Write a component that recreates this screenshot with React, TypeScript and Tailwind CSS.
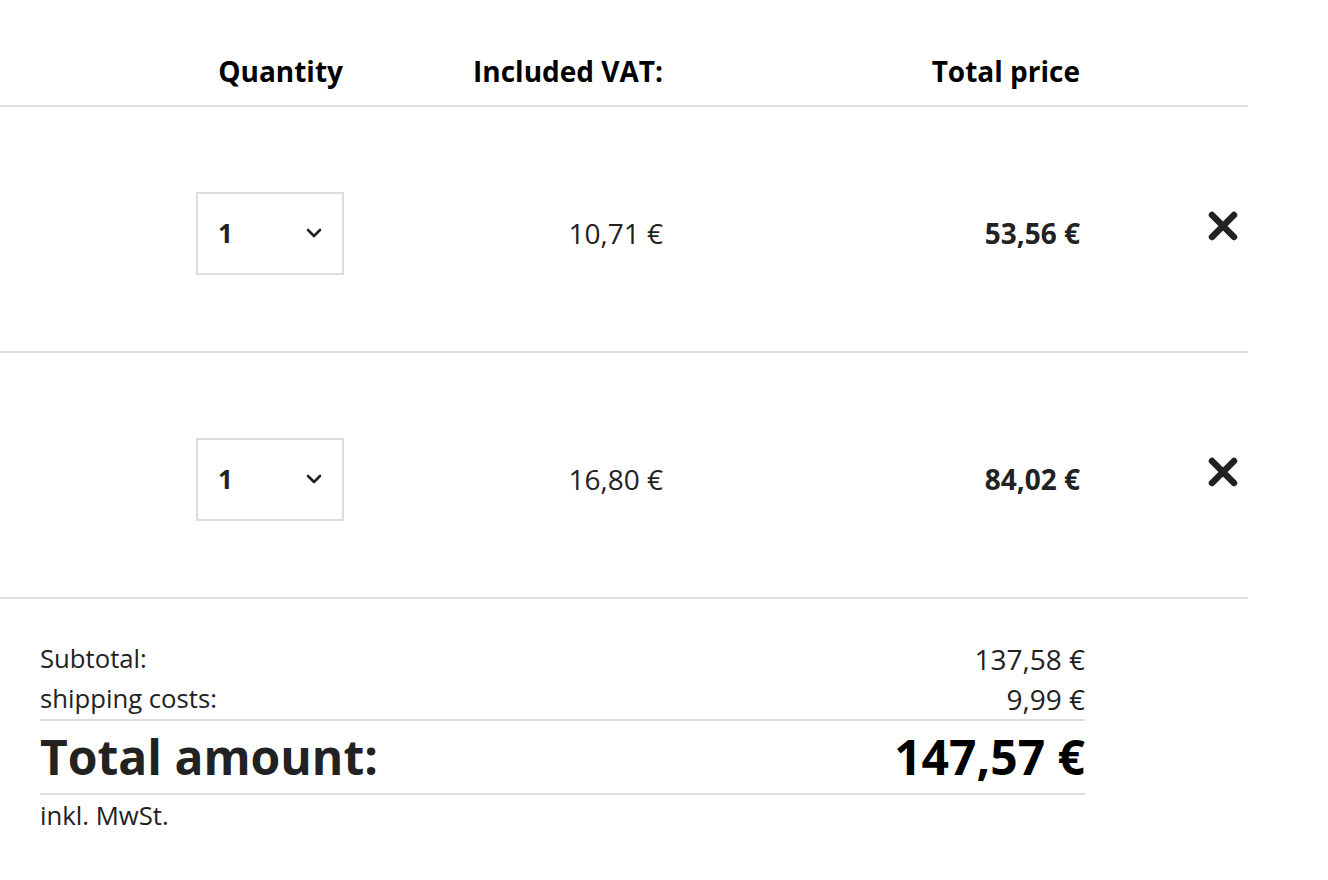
import React from "react";

// cart table with summary block

const items = [
  { qty: 1, vat: "10,71 €", total: "53,56 €" },
  { qty: 1, vat: "16,80 €", total: "84,02 €" },
];

function Chevron() {
  return (
    <svg width="18" height="12" viewBox="0 0 18 12" fill="none">
      <path d="M3 3l6 6 6-6" stroke="#222" strokeWidth="2.6" strokeLinecap="round" strokeLinejoin="round" />
    </svg>
  );
}

function RemoveIcon() {
  return (
    <svg width="34" height="34" viewBox="0 0 34 34" fill="none">
      <path d="M6 6l22 22M28 6L6 28" stroke="#222" strokeWidth="6.5" strokeLinecap="round" />
    </svg>
  );
}

export default function App() {
  return (
    <div className="min-h-[880px] w-[1328px] bg-white text-[#222]" style={{ fontFamily: '"Open Sans", "Noto Sans", sans-serif' }}>
      <div className="w-[1248px]">
        {/* header */}
        <div className="grid h-[107px] grid-cols-[344px_319px_417px_1fr] items-end border-b-2 border-[#ddd] pb-[16px] text-[28px] font-bold leading-[36px] text-black">
          <div className="pr-px text-right">Quantity</div>
          <div className="text-right">Included VAT:</div>
          <div className="text-right">Total price</div>
          <div />
        </div>

        {items.map((item, i) => (
          <div key={i} className="grid h-[246px] grid-cols-[344px_319px_417px_1fr] items-center border-b-2 border-[#ddd] pt-[8px]">
            <div className="flex justify-end">
              <div className="flex h-[83px] w-[148px] items-center justify-between border-2 border-[#ddd] pl-[20px] pr-[19px]">
                <span className="text-[26px] font-bold">{item.qty}</span>
                <Chevron />
              </div>
            </div>
            <div className="text-right text-[28px]">{item.vat}</div>
            <div className="text-right text-[28px] font-bold">{item.total}</div>
            <div className="flex justify-end pr-[8px] pb-[14px]">
              <RemoveIcon />
            </div>
          </div>
        ))}
      </div>

      {/* summary */}
      <div className="ml-[40px] w-[1045px] pt-[40px] text-[25.7px]">
        <div className="flex items-center justify-between leading-[40px]">
          <span>Subtotal:</span>
          <span className="text-[28px]">137,58 €</span>
        </div>
        <div className="flex items-center justify-between border-b-2 border-[#ddd] leading-[40px]">
          <span>shipping costs:</span>
          <span className="text-[28px]">9,99 €</span>
        </div>
        <div className="flex justify-between border-b-2 border-[#ddd] text-[48px] font-bold leading-[72px]">
          <span>Total amount:</span>
          <span className="text-black">147,57 €</span>
        </div>
        <div className="leading-[42px]">inkl. MwSt.</div>
      </div>
    </div>
  );
}
